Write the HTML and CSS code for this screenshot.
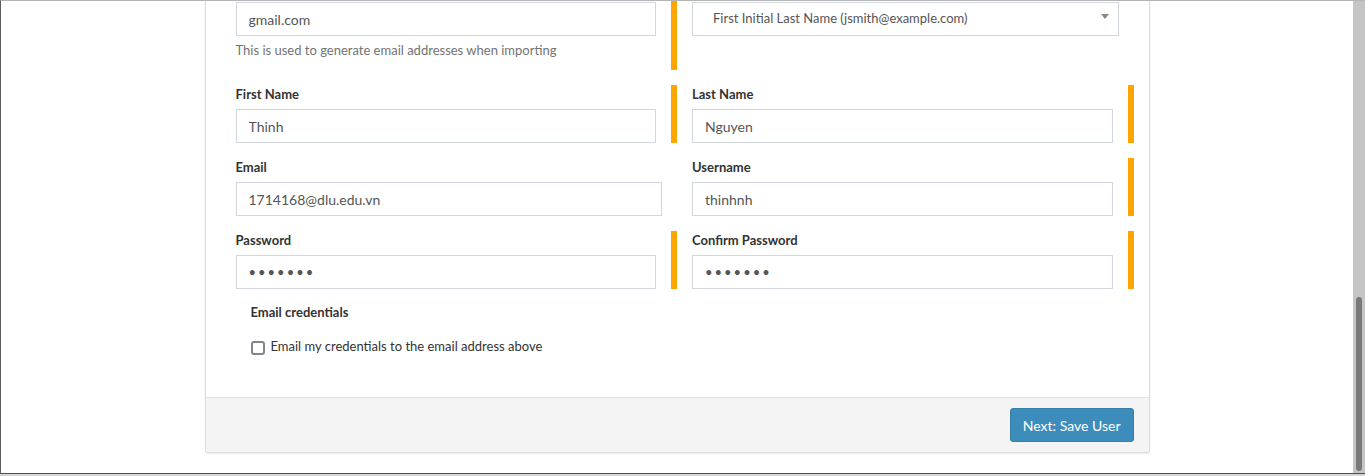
FILE: index.html
```html
<!DOCTYPE html>
<html lang="en">
<head>
<meta charset="utf-8">
<title>Create User</title>
<link rel="stylesheet" href="styles.css">
</head>
<body>
<div class="frame">
  <div class="viewport">
    <div class="card">
      <div class="card-body">
        <div class="row first">
          <div class="col bar">
            <input class="input" type="text" value="gmail.com">
            <p class="help">This is used to generate email addresses when importing</p>
          </div>
          <div class="col">
            <div class="select">
              <span class="select-text">First Initial Last Name (jsmith@example.com)</span>
              <span class="caret"></span>
            </div>
          </div>
        </div>
        <div class="row">
          <div class="col bar">
            <label class="label">First Name</label>
            <input class="input" type="text" value="Thinh">
          </div>
          <div class="col bar">
            <label class="label">Last Name</label>
            <input class="input" type="text" value="Nguyen">
          </div>
        </div>
        <div class="row">
          <div class="col">
            <label class="label">Email</label>
            <input class="input" type="text" value="1714168@dlu.edu.vn">
          </div>
          <div class="col bar">
            <label class="label">Username</label>
            <input class="input" type="text" value="thinhnh">
          </div>
        </div>
        <div class="row">
          <div class="col bar">
            <label class="label">Password</label>
            <input class="input pw" type="password" value="1234567">
          </div>
          <div class="col bar">
            <label class="label">Confirm Password</label>
            <input class="input pw" type="password" value="1234567">
          </div>
        </div>
        <div class="credentials">
          <div class="label">Email credentials</div>
          <label class="check">
            <input class="checkbox" type="checkbox">
            <span>Email my credentials to the email address above</span>
          </label>
        </div>
      </div>
      <div class="card-footer">
        <button class="btn" type="button">Next: Save User</button>
      </div>
    </div>
  </div>
  <div class="scrollbar"><div class="thumb"></div></div>
</div>
</body>
</html>
```

FILE: styles.css
```css
* { box-sizing: border-box; }

html, body {
  margin: 0;
  padding: 0;
  background: #d6d6d6;
  font-family: Lato, "Open Sans", "Liberation Sans", sans-serif;
  font-size: 13px;
  color: #333;
}

.frame {
  display: flex;
  height: 474px;
  border-top: 1px solid #b4b4b4;
  border-bottom: 1px solid #4e4e4e;
  border-left: 1px solid #5e5e5e;
  background: #fff;
}

.viewport {
  flex: 1;
  overflow: hidden;
  background: #fff;
}

.scrollbar {
  width: 12px;
  flex: none;
  background: #c4c6c5;
  display: flex;
  flex-direction: column;
  justify-content: flex-end;
  padding: 0 3px 2px 3px;
}

.thumb {
  height: 174px;
  border-radius: 3px;
  background: #777a79;
}

.card {
  width: 945px;
  margin: -16px auto 0 auto;
  border: 1px solid #dcdcdc;
  border-top: 0;
  border-radius: 0 0 3px 3px;
  background: #fff;
  box-shadow: 0 1px 2px rgba(0, 0, 0, 0.08);
}

.card-body {
  padding: 0 15px 41px 15px;
}

.row {
  display: flex;
  margin-bottom: 15px;
}

.row.first .col {
  padding-top: 17px;
}

.col {
  width: 50%;
  padding: 0 15px;
}

.col.bar {
  border-right: 6px solid #ffa500;
}

.label {
  display: block;
  font-weight: 700;
  color: #333;
  line-height: 19px;
  margin-bottom: 5px;
}

.input {
  display: block;
  width: 100%;
  height: 34px;
  margin: 0;
  padding: 6px 12px;
  border: 1px solid #d2d6de;
  border-radius: 0;
  background: #fff;
  font-family: Lato, "Open Sans", "Liberation Sans", sans-serif;
  font-size: 14px;
  color: #555;
  outline: none;
}

.input.pw {
  letter-spacing: 2px;
  font-size: 13px;
}

.help {
  margin: 5px 0 10px 0;
  line-height: 19px;
  color: #737373;
}

.select {
  display: flex;
  align-items: center;
  justify-content: space-between;
  height: 34px;
  padding: 0 9px 3px 20px;
  border: 1px solid #d2d6de;
  font-size: 13px;
  color: #555;
}

.caret {
  width: 0;
  height: 0;
  margin-bottom: 3px;
  border-top: 5px solid #888;
  border-left: 4px solid transparent;
  border-right: 4px solid transparent;
}

.credentials {
  padding: 0 30px;
  margin-top: -1px;
}

.check {
  display: flex;
  align-items: center;
  gap: 6px;
  margin-top: 15px;
  line-height: 19px;
  color: #333;
}

.checkbox {
  appearance: none;
  -webkit-appearance: none;
  width: 14px;
  height: 14px;
  margin: 2px 0 0 0;
  border: 2px solid #85838f;
  border-radius: 3px;
  background: #fff;
}

.card-footer {
  display: flex;
  justify-content: flex-end;
  padding: 10px 15px;
  border-top: 1px solid #e2e2e2;
  background: #f4f4f4;
  border-radius: 0 0 3px 3px;
}

.btn {
  height: 34px;
  padding: 6px 12px;
  border: 1px solid #367fa9;
  border-radius: 3px;
  background: #3c8dbc;
  color: #fff;
  font-family: Lato, "Open Sans", "Liberation Sans", sans-serif;
  font-size: 14px;
}
```
